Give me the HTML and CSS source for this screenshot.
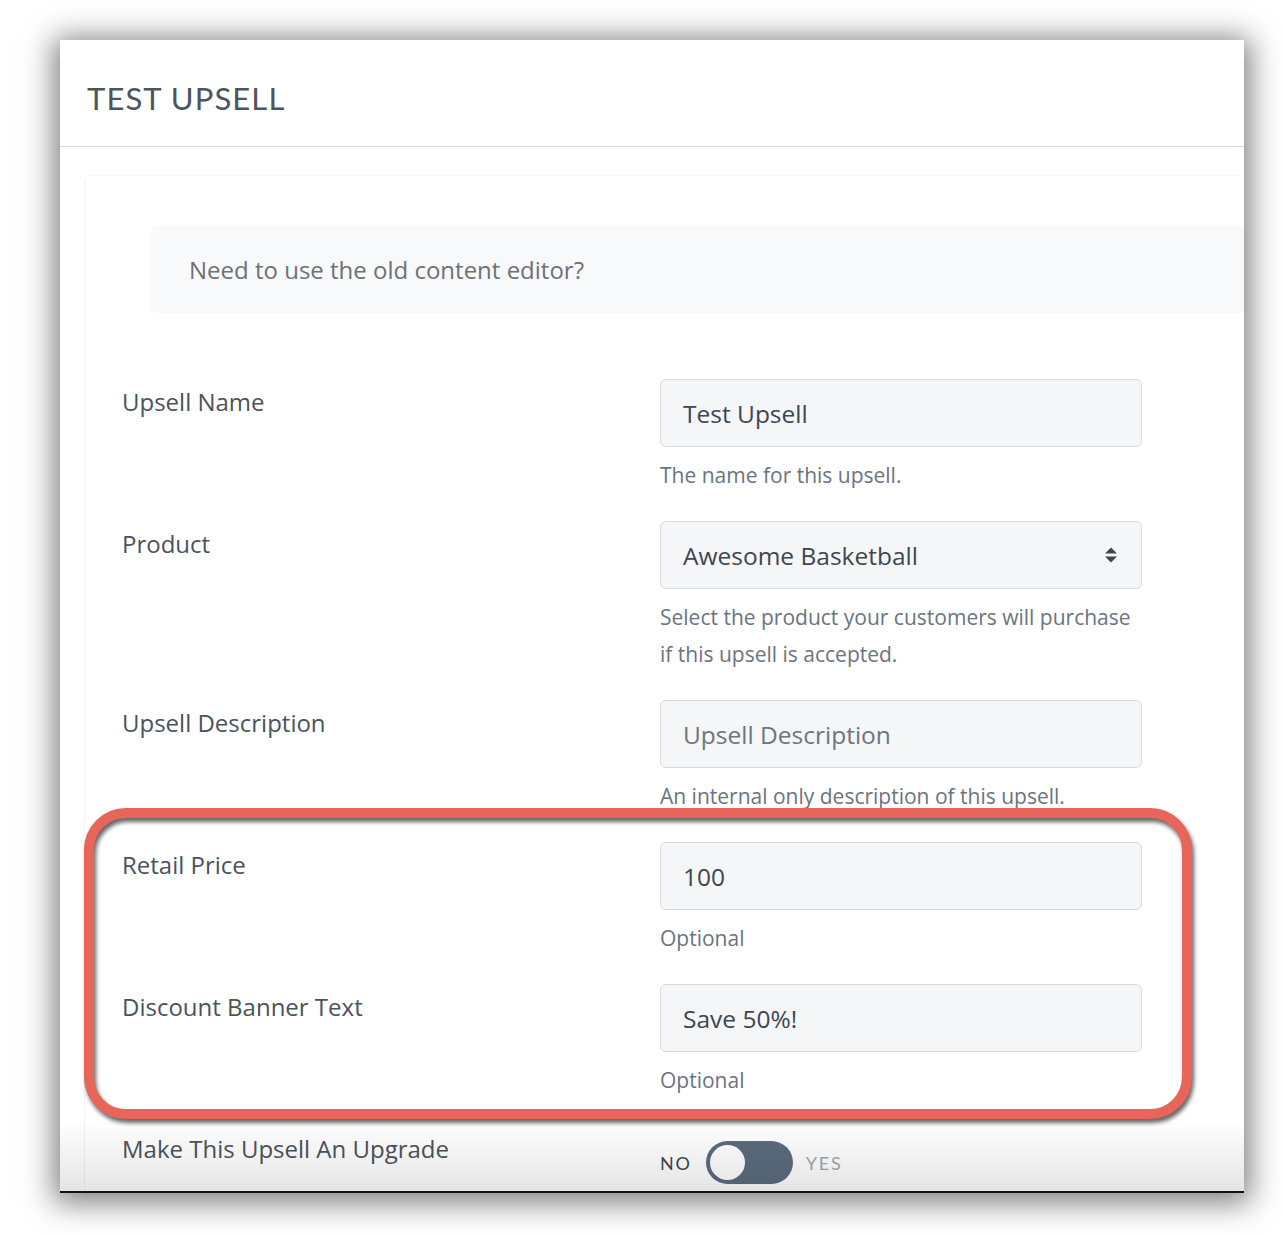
FILE: index.html
```html
<!DOCTYPE html>
<html>
<head>
<meta charset="utf-8">
<title>Test Upsell</title>
<link rel="stylesheet" href="styles.css">
</head>
<body>
<div class="window">
  <header class="win-header">
    <h1 class="title">TEST UPSELL</h1>
  </header>
  <div class="panel">
    <div class="notice">Need to use the old content editor?</div>
    <div class="form">
      <div class="row">
        <div class="label">Upsell Name</div>
        <div class="field">
          <div class="input">Test Upsell</div>
          <p class="help">The name for this upsell.</p>
        </div>
      </div>
      <div class="row">
        <div class="label">Product</div>
        <div class="field">
          <div class="input select">
            <span>Awesome Basketball</span>
            <svg class="caret" width="14" height="20" viewBox="0 0 14 20"><path d="M1 8.5 L7 2.5 L13 8.5 Z M1 11.5 L7 17.5 L13 11.5 Z" fill="#3f4650"/></svg>
          </div>
          <p class="help">Select the product your customers will purchase if this upsell is accepted.</p>
        </div>
      </div>
      <div class="row">
        <div class="label">Upsell Description</div>
        <div class="field">
          <div class="input placeholder">Upsell Description</div>
          <p class="help">An internal only description of this upsell.</p>
        </div>
      </div>
      <div class="row">
        <div class="label">Retail Price</div>
        <div class="field">
          <div class="input">100</div>
          <p class="help">Optional</p>
        </div>
      </div>
      <div class="row">
        <div class="label">Discount Banner Text</div>
        <div class="field">
          <div class="input">Save 50%!</div>
          <p class="help">Optional</p>
        </div>
      </div>
      <div class="row">
        <div class="label-group">
          <div class="label">Make This Upsell An Upgrade</div>
          <p class="help desc">When a customer upgrades, the upsell product replaces the original product in their order.</p>
        </div>
        <div class="field">
          <div class="switch">
            <span class="switch-no">NO</span>
            <span class="pill"><span class="knob"></span></span>
            <span class="switch-yes">YES</span>
          </div>
        </div>
      </div>
    </div>
  </div>
  <div class="highlight"></div>
</div>
</body>
</html>
```

FILE: styles.css
```css
* { box-sizing: border-box; }

html, body {
  margin: 0;
  background: #ffffff;
}

body {
  width: 1284px;
  height: 1234px;
  overflow: hidden;
  font-family: "Open Sans", Lato, "Noto Sans", sans-serif;
}

.window {
  position: relative;
  margin: 40px 0 0 60px;
  width: 1184px;
  height: 1153px;
  background: #ffffff;
  border-bottom: 2px solid #111111;
  box-shadow: 0 4px 28px 6px rgba(0, 0, 0, 0.5);
  overflow: hidden;
}

.window::after {
  content: "";
  position: absolute;
  left: 0;
  right: 0;
  bottom: 0;
  height: 72px;
  background: linear-gradient(to bottom, rgba(0, 0, 0, 0), rgba(0, 0, 0, 0.1));
  pointer-events: none;
}

.win-header {
  height: 107px;
  border-bottom: 1px solid #cfd8e0;
  padding: 40px 0 0 27px;
}

.title {
  margin: 0;
  font-family: Lato, "Open Sans", sans-serif;
  font-size: 31px;
  line-height: 36px;
  font-weight: 400;
  color: #4c545e;
  letter-spacing: 1.1px;
}

.panel {
  margin: 28px 0 0 24px;
  border-left: 1px solid #f1f2f3;
  border-top: 1px solid #f6f7f8;
  border-top-left-radius: 6px;
  padding: 50px 0 0 37px;
  min-height: 1100px;
}

.notice {
  margin-left: 29px;
  height: 87px;
  background: #f8f9fb;
  border-radius: 6px 0 0 6px;
  padding-left: 38px;
  display: flex;
  align-items: center;
  font-size: 24px;
  color: #6f7174;
}

.form {
  margin-top: 66px;
}

.row {
  display: grid;
  grid-template-columns: 538px 482px;
  margin-bottom: 27px;
}

.label {
  padding-top: 5px;
  line-height: 36px;
  font-size: 24px;
  color: #4b535d;
}

.input {
  height: 68px;
  border: 1px solid #d5dbe1;
  border-radius: 6px;
  background: #f5f6f8;
  padding: 0 22px;
  display: flex;
  align-items: center;
  font-size: 24.5px;
  color: #3f4650;
}

.input.placeholder {
  color: #6c7580;
}

.select {
  justify-content: space-between;
  padding-right: 23px;
}

.caret {
  display: block;
}

.help {
  margin: 10px 0 0;
  font-size: 21px;
  line-height: 37px;
  color: #6b7480;
}

.help.desc {
  margin-top: 14px;
  max-width: 480px;
}

.switch {
  display: flex;
  align-items: center;
  margin-top: 15px;
}

.switch-no,
.switch-yes {
  font-family: Lato, "Open Sans", sans-serif;
  font-size: 18px;
  letter-spacing: 1.8px;
  font-weight: 400;
}

.switch-no {
  color: #3f4650;
  margin-right: 14px;
}

.switch-yes {
  color: #9ea8b2;
  margin-left: 13px;
}

.pill {
  position: relative;
  width: 87px;
  height: 43px;
  border-radius: 22px;
  background: #5b6c7f;
}

.knob {
  position: absolute;
  left: 4px;
  top: 4px;
  width: 35px;
  height: 35px;
  border-radius: 50%;
  background: #ffffff;
}

.highlight {
  position: absolute;
  left: 24px;
  top: 768px;
  width: 1108px;
  height: 311px;
  border: 10px solid #e8655a;
  border-radius: 42px;
  filter: drop-shadow(2px 4px 2px rgba(0, 0, 0, 0.6));
  pointer-events: none;
}
```
